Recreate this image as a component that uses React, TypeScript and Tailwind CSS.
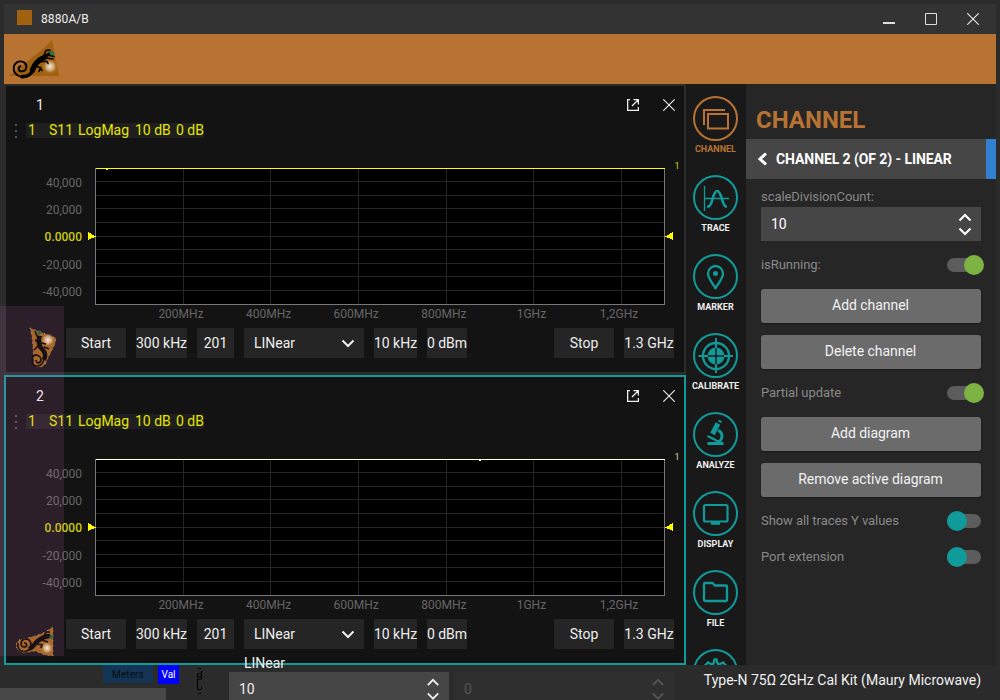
import React from "react";

function Lizard() {
  return (
    <g fill="none" stroke="currentColor" strokeLinecap="round">
      <path strokeWidth="1.9" d="M12.5 28.2C9.6 29 10 33.3 13.8 33.4C18.8 33.4 20 27 16 24.4C11 21.6 5.6 25 5.7 30.8C6 36.6 11.5 39.6 17 38.8" />
      <path strokeWidth="3.6" d="M14 38.6C20 39 24 35.5 25.5 31" />
      <path strokeWidth="5.4" d="M24.5 32C27 25 30 23 36 19.5" />
      <path strokeWidth="3.2" d="M36 19L43 15" />
      <path strokeWidth="1.6" d="M28 28.5L32.5 29.5L31 33.5M32 29.5L34 32.5M32 23.5L39 23.5L40 25.5M36 17L38 12.5L42 12M40 17L46 18.5M38 20L45 21M28 24L31 20L34 19" />
    </g>
  );
}

function Pearl({ id, x, y, r }: { id: string; x: number; y: number; r: number }) {
  return (
    <>
      <defs>
        <radialGradient id={id}>
          <stop offset="0" stopColor="#f4ece0" />
          <stop offset="0.5" stopColor="#d9b995" stopOpacity="0.8" />
          <stop offset="1" stopColor="#a0620f" stopOpacity="0" />
        </radialGradient>
      </defs>
      <circle cx={x} cy={y} r={r} fill={`url(#${id})`} />
    </>
  );
}

function Logo() {
  return (
    <svg className="ml-1 mt-1 block text-black" width="52" height="44" viewBox="0 0 52 44">
      <path d="M1 38L9 32L26 18L30 15L36 10L44 2L51 38Z" fill="#a0620f" />
      <Pearl id="pearl-main" x={42} y={28.5} r={8} />
      <Lizard />
      <path d="M41 15L44 12.500L47 16L43 17.500Z" fill="#207a50" />
    </svg>
  );
}

function TiltedLogo() {
  return (
    <svg className="absolute left-[28px] top-[326px] text-[#171015]" width="30" height="44" viewBox="0 0 30 44">
      <path d="M2 2L28 12L27 18L19 34C18 42 8 43 6 38L5 22L4 11Z" fill="#a9662a" />
      <path d="M2 2L28 12L27 18L19 34C18 42 8 43 6 38L5 22L4 11Z" fill="none" stroke="#ccb8b0" strokeWidth="0.7" strokeDasharray="1 4" />
      <Pearl id="pearl-tilt" x={20} y={14} r={7} />
      <g fill="none" stroke="currentColor">
        <path strokeWidth="4.500" d="M11 11C11 16 10 20 14 23C17 26 18 30 16 34" />
        <path strokeWidth="1.600" d="M16 32C15 42 5 42 4 35C3 27 12 28 13 33C13 38 8 38 8 34M7 5L9 10L14 11M13 17L18 18M10 20L6 24M16 21L21 23M7 14L12 17" />
      </g>
      <path d="M9 7L11 4L14 6L11 9Z" fill="#28684d" />
    </svg>
  );
}

function FlatLogo() {
  return (
    <svg className="absolute left-[15px] top-[626px] text-[#1b1118]" width="41" height="33" viewBox="0 0 41 33">
      <path d="M1 18L4 14L20 10L28 7L38 1L38 30L30 29L20 25L8 27L2 23Z" fill="#a9662a" />
      <path d="M1 18L4 14L20 10L28 7L38 1L38 30L30 29L20 25L8 27L2 23Z" fill="none" stroke="#ccb8b0" strokeWidth="0.7" strokeDasharray="1 4" />
      <Pearl id="pearl-flat" x={32} y={22} r={6.5} />
      <g fill="none" stroke="currentColor">
        <path strokeWidth="4.500" d="M14 23C19 21 20 16 24 14C28 11 31 10 35 10" />
        <path strokeWidth="1.700" d="M9 17C12 17 13 21 9 21C5 21 5 14 10 13C17 12 18 22 12 25C6 27 2 23 3 17M22 18L27 19L26 22M27 14L33 16M29 10L31 6L35 6M33 10L38 11" />
      </g>
      <path d="M34 11L37 9L39 12L35 13Z" fill="#28684d" />
    </svg>
  );
}

const rows = [181, 195, 208, 222, 236, 249, 263, 276, 290];
const cols = [183, 270, 358, 446, 533, 621];
const xLabels = ["200MHz", "400MHz", "600MHz", "800MHz", "1GHz", "1,2GHz"];
const yLabels = ["40,000", "20,000", "0.0000", "-20,000", "-40,000"];

function Chart({ trace, dot }: { trace: string; dot: number }) {
  return (
    <svg className="block shrink-0 font-[Roboto,sans-serif]" width="678" height="170" viewBox="6 155 678 170">
      <g shapeRendering="crispEdges">
        <rect x="96" y="169" width="568" height="135" fill="#000" />
        {rows.map((y) => <rect key={y} x="96" y={y} width="568" height="1" fill="#252525" />)}
        {cols.map((x) => <rect key={x} x={x} y="169" width="1" height="135" fill="#252525" />)}
        <rect x="95" y="168" width="1" height="137" fill="#777" />
        <rect x="664" y="168" width="1" height="137" fill="#777" />
        <rect x="95" y="304" width="570" height="1" fill="#777" />
        <rect x="96" y="168" width="569" height="1" fill={trace} />
        <rect x={dot} y="169" width="2" height="1" fill={trace} />
        <path d="M88 232L96 236.500L88 240Z M673 232L665 236.500L673 240Z" fill="#ff0" />
      </g>
      {yLabels.map((t, i) => (
        <text key={t} x="82" y={187 + i * 27.25 - (i === 2 ? 0.5 : 0)} fontSize="12" fontWeight={i === 2 ? 500 : 400} textAnchor="end" fill={i === 2 ? "#cccc10" : "#666"}>{t}</text>
      ))}
      {xLabels.map((t, i) => (
        <text key={t} x={181 + i * 87.6} y="318" fontSize="12" textAnchor="middle" fill="#666">{t}</text>
      ))}
      <text x="677" y="169" fontSize="9" textAnchor="middle" fill={trace === "#ffff00" ? "#d6d610" : "#d6d6ae"}>1</text>
    </svg>
  );
}

function Chevron({ className = "", up = false }: { className?: string; up?: boolean }) {
  return (
    <svg className={className} width="14" height="9" viewBox="0 0 14 9" fill="none" stroke="currentColor" strokeWidth="2">
      <path d={up ? "M1.500 7.500L7 2L12.500 7.500" : "M1.500 1.500L7 7L12.500 1.500"} />
    </svg>
  );
}

function Close() {
  return (
    <svg width="12" height="12" viewBox="0 0 12 12" stroke="currentColor" strokeWidth="1.100">
      <path d="M0.300 0.300L11.700 11.700M11.700 0.300L0.300 11.700" />
    </svg>
  );
}

function Diagram({ index, active, trace, dot }: { index: number; active: boolean; trace: string; dot: number }) {
  const field = "flex h-[30px] shrink-0 items-center justify-center whitespace-nowrap bg-[#252525]";
  return (
    <section className={`flex h-[290px] w-[682px] flex-col border-2 bg-[#131313] ${active ? "border-[#119a9a]" : "border-[#2c2c2c]"}`}>
      <header className="flex h-[37px] shrink-0 items-center pl-[30px] pr-[9px] text-[#eee]">
        <span className="flex-1">{index}</span>
        <svg className="mr-6" width="13" height="13" viewBox="0 0 13 13" fill="none" stroke="currentColor" strokeWidth="1.300">
          <path d="M4 1.650H1.650V12.350H12.350V9M7.500 1.650H12.350V6.500M12 2L6 8" />
        </svg>
        <span className="pt-px"><Close /></span>
      </header>
      <div className="flex h-8 shrink-0 text-[#e6e600]">
        <svg className="mr-[9px] mt-[1px] ml-[9px]" width="2" height="14" fill="#555">
          <path d="M0 0h2v2H0zM0 6h2v2H0zM0 12h2v2H0z" />
        </svg>
        <div className="flex h-[15px] w-[178px] bg-[#1f1f1f] pl-[2px] leading-[14px]">
          <span className="w-[21px] shrink-0">{1}</span>
          <span className="w-[29px] shrink-0">S11</span>
          <span className="w-[57px] shrink-0">LogMag</span>
          <span className="w-[41px] shrink-0">10 dB</span>
          <span className="whitespace-nowrap">0 dB</span>
        </div>
      </div>
      <Chart trace={trace} dot={dot} />
      <div className="mt-[3px] flex gap-[10px] pl-[60px] text-[#eee]">
        <span className={`${field} w-[60px]`}>Start</span>
        <span className={`${field} w-[51px]`}>300 kHz</span>
        <span className={`${field} w-[37px]`}>201</span>
        <span className="flex h-[30px] w-[120px] items-center justify-between bg-[#252525] pl-[10px] pr-[9px]">LINear<Chevron /></span>
        <span className={`${field} w-[43px]`}>10 kHz</span>
        <span className={`${field} w-[40px]`}>0 dBm</span>
        <span className={`${field} ml-[77px] w-[60px]`}>Stop</span>
        <span className={`${field} w-[50px]`}>1.3 GHz</span>
      </div>
    </section>
  );
}

const icons: { name: string; label: string; art: React.ReactNode }[] = [
  { name: "channel", label: "CHANNEL", art: <><rect x="15" y="18" width="20" height="14.500" /><path d="M11 29V14H32" /></> },
  { name: "trace", label: "TRACE", art: <><path strokeWidth="1.300" d="M11.500 11V36M11.500 23.500H36" /><path strokeWidth="2.700" d="M14 31.500H15.500C20 30 19.500 16 24.200 16S28.500 30 33 31.500H34" /></> },
  { name: "marker", label: "MARKER", art: <><path strokeWidth="2.300" d="M22.500 34C18.500 28 15 24 15 19.500A7.500 7.500 0 0 1 30 19.500C30 24 26.500 28 22.500 34Z" /><circle cx="22.500" cy="19.500" r="2.500" fill="currentColor" stroke="none" /></> },
  { name: "calibrate", label: "CALIBRATE", art: <><circle cx="23" cy="23" r="13" strokeWidth="2.300" /><path fill="currentColor" stroke="none" d="M22.300 22.300V14.500A8.500 8.500 0 0 0 14.500 22.300ZM23.700 22.300V14.500A8.500 8.500 0 0 1 31.500 22.300ZM22.300 23.700V31.500A8.500 8.500 0 0 1 14.500 23.700ZM23.700 23.700V31.500A8.500 8.500 0 0 0 31.500 23.700Z" /><path d="M23 5V15M23 31V40M5.500 23H15M31 23H40" strokeWidth="1.900" /></> },
  { name: "analyze", label: "ANALYZE", art: <><path d="M25 11.500L19.500 22" strokeWidth="5" /><path d="M25.500 8.500L28.500 10.200" strokeWidth="2" /><path d="M14.500 24L23.500 28.500" strokeWidth="2.200" /><path d="M25 18.500C30 20 30.500 27 25 31" strokeWidth="2.900" /><path d="M14.500 31.500H30.500" strokeWidth="3" /><path d="M24.500 28V31" strokeWidth="3" /></> },
  { name: "display", label: "DISPLAY", art: <><rect x="11" y="14" width="23.500" height="16.500" rx="1.500" strokeWidth="2.200" /><path d="M18 32.300H27" strokeWidth="3" /></> },
  { name: "file", label: "FILE", art: <path strokeWidth="2.300" d="M12 13H19.500L22 15.500H33Q34 15.500 34 16.500V30Q34 31 33 31H12Q11 31 11 30V14Q11 13 12 13Z" /> },
  { name: "gear", label: "", art: <path strokeWidth="2.300" d="M12 22L14 20L12 16.500L15 13.500L19 15.500L20.500 14.500L21.500 10.500H23.500L24.500 14.500L26 15.500L30 13.500L33 16.500L31 20L33 22" /> },
];

function Sidebar() {
  return (
    <nav className="flex h-[581px] w-[60px] shrink-0 flex-col overflow-hidden bg-[#191919] pt-3">
      {icons.map(({ name, label, art }) => (
        <div key={name} className={`flex h-[79px] shrink-0 flex-col items-center ${name === "channel" ? "text-[#b87333]" : "text-[#eee]"}`}>
          <svg className={`-ml-px block shrink-0 ${name === "channel" ? "text-[#b87333]" : "text-[#119a9a]"}`} width="45" height="45" viewBox="0 0 45 45" fill="none" stroke="currentColor" strokeWidth="2">
            <circle cx="22.500" cy="22.500" r="21.500" />
            {art}
          </svg>
          {label && <span className="-ml-px mt-[2px] text-[9px] font-bold leading-3">{label}</span>}
        </div>
      ))}
    </nav>
  );
}

function Toggle({ label, on = false, className }: { label: string; on?: boolean; className: string }) {
  return (
    <div className={`flex shrink-0 items-center justify-between text-[13px] tracking-[-0.06px] text-[#888] ${className}`}>
      {label}
      <span className="flex h-[14px] w-[34px] items-center rounded-full bg-[#5c5c5c]">
        <span className={`size-5 shrink-0 rounded-full ${on ? "ml-[17px] bg-[#7cb342]" : "bg-[#119a9a]"}`} />
      </span>
    </div>
  );
}

function Button({ children }: { children: React.ReactNode }) {
  return <button className="flex h-[34px] w-full shrink-0 items-center justify-center rounded-[3px] bg-[#6b6b6b] pb-[2px] pr-px tracking-[-0.04px] text-[#f2f2f2] shadow-[0_1px_2px_#1a1a1a]">{children}</button>;
}

function Inspector() {
  return (
    <aside className="flex w-[250px] shrink-0 flex-col bg-[#262626]">
      <h1 className="flex h-[55px] shrink-0 items-center pl-[10px] pt-4 text-[24px] font-bold text-[#b87333]">CHANNEL</h1>
      <div className="flex h-10 shrink-0 items-center border-r-[10px] border-[#3280d0] bg-[#464646] pl-[11px] font-bold tracking-[-0.08px] text-white">
        <svg className="mr-2" width="11" height="14" viewBox="0 0 11 14" fill="none" stroke="currentColor" strokeWidth="3"><path d="M9 1.500L3 7L9 12.500" /></svg>
        CHANNEL 2 (OF 2) - LINEAR
      </div>
      <div className="flex flex-col px-[15px]">
        <span className="flex h-7 items-center pt-[7px] text-[13px] tracking-[-0.06px] text-[#888]">scaleDivisionCount:</span>
        <div className="flex h-[34px] shrink-0 items-center justify-between bg-[#464646] pl-[10px] pr-[9px] text-white">
          10
          <span className="flex flex-col gap-[5px]"><Chevron up /><Chevron /></span>
        </div>
        <Toggle label="isRunning:" on className="h-12" />
        <div className="flex flex-col gap-3"><Button>Add channel</Button><Button>Delete channel</Button></div>
        <Toggle label="Partial update" on className="h-12" />
        <div className="flex flex-col gap-3"><Button>Add diagram</Button><Button>Remove active diagram</Button></div>
        <Toggle label="Show all traces Y values" className="mt-[6px] h-9" />
        <Toggle label="Port extension" className="h-9" />
      </div>
    </aside>
  );
}

function StatusBar() {
  return (
    <footer className="flex h-[35px] shrink-0 bg-[#2b2b2b]">
      <div className="flex w-[229px] shrink-0 flex-col">
        <div className="flex h-[23px] shrink-0 pl-[103px] text-[10px]">
          <span className="mr-[5px] flex h-[18px] w-[50px] items-center justify-center bg-[#143556] pt-px tracking-[0.1px] text-[#050b12]">Meters</span>
          <span className="flex h-[19px] w-[21px] items-center justify-center bg-[#0000ff] text-white">Val</span>
          <svg className="ml-[16px] mt-[3px] shrink-0" width="10" height="27" fill="none" stroke="#000"><path d="M3 .5H6M2.500 6V10M2.500 5.500H6.500V11H2.500M3 8.500H6M6.500 3V5M2.500 11V21.500H6M6.500 19V21M3 25.500H6" /></svg>
        </div>
        <div className="h-3 w-[166px] bg-[#484848]" />
      </div>
      <div className="mt-[7px] flex h-[28px] w-[220px] shrink-0 justify-between overflow-hidden bg-[#464646] pl-[10px] pr-[9px] pt-[6px] text-[#eee]">
        <span className="leading-[22px]">10</span>
        <span className="flex flex-col gap-[5px]"><Chevron up /><Chevron /></span>
      </div>
      <div className="ml-[5px] mt-[7px] flex h-[28px] w-[220px] shrink-0 justify-between overflow-hidden bg-[#2f2f2f] pl-[10px] pr-[9px] pt-[6px] text-[#555]">
        <span className="leading-[22px]">0</span>
        <span className="flex flex-col gap-[5px]"><Chevron up /><Chevron /></span>
      </div>
      <span className="flex-1 whitespace-nowrap pr-[19px] pt-[5px] text-right leading-5 text-[#f0f0f0]">Type-N 75Ω 2GHz Cal Kit (Maury Microwave)</span>
    </footer>
  );
}

export default function App() {
  return (
    <div className="relative flex h-[700px] w-[1000px] flex-col overflow-hidden bg-[#2b2b2b] pt-1 font-[Roboto,sans-serif] text-[14px] leading-[16px]">
      <div className="mx-1 flex h-[30px] shrink-0 items-center bg-[#333] text-[#eee]">
        <span className="-mt-1 ml-[13px] size-[15px] bg-[#a0620f]" />
        <span className="ml-[9px] flex-1 text-[12px] tracking-[0.1px]">8880A/B</span>
        <svg className="mr-[30px]" width="12" height="13"><path d="M0 9H12V11H0Z" fill="#ddd" /></svg>
        <svg className="mr-[30px]" width="12" height="12" fill="none" stroke="#ddd"><path d="M.5.500H11.500V11.500H.500Z" /></svg>
        <span className="mr-[17px]"><Close /></span>
      </div>
      <div className="mx-1 h-[50px] shrink-0 bg-[#b87333]"><Logo /></div>
      <main className="mx-1 flex h-[581px] shrink-0">
        <div className="flex w-[682px] shrink-0 flex-col gap-px">
          <Diagram index={1} active={false} trace="#ffff00" dot={106} />
          <Diagram index={2} active trace="#ffffd8" dot={479} />
        </div>
        <Sidebar />
        <Inspector />
      </main>
      <StatusBar />
      <div className="absolute left-0 top-[306px] h-[350px] w-[64px] bg-[#e37fca]/12" />
      <TiltedLogo />
      <FlatLogo />
      <span className="absolute left-[244px] top-[655px] text-[#eee]">LINear</span>
    </div>
  );
}
